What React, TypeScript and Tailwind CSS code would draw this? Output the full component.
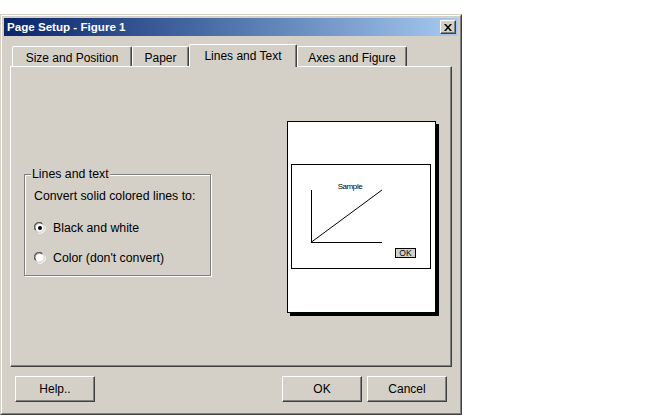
import React from "react";

function Tab({ label, w, selected }: { label: string; w: string; selected?: boolean }) {
  if (selected) {
    return (
      <div
        className={`${w} h-[23px] -mb-px relative z-10 bg-[#d4d0c8] border-t border-l border-white border-r border-r-[#404040] shadow-[inset_-1px_0_0_#808080] rounded-tl-[2px] rounded-tr-[2px] flex items-center justify-center pb-[1px]`}
      >
        {label}
      </div>
    );
  }
  return (
    <div
      className={`${w} h-[20px] bg-[#d4d0c8] border-t border-l border-white border-r border-r-[#404040] shadow-[inset_-1px_0_0_#808080] rounded-tl-[2px] rounded-tr-[2px] flex items-center justify-center pt-[2px]`}
    >
      {label}
    </div>
  );
}

function Button({ label }: { label: string }) {
  return (
    <div className="w-[80px] h-[26px] bg-[#d4d0c8] border border-t-white border-l-white border-b-[#404040] border-r-[#404040] shadow-[inset_-1px_-1px_0_#808080] flex items-center justify-center">
      {label}
    </div>
  );
}

function Radio({ checked }: { checked?: boolean }) {
  return (
    <svg width="12" height="12" viewBox="0 0 12 12" className="shrink-0">
      <path d="M1 8 A5 5 0 0 1 8 1" fill="none" stroke="#808080" strokeWidth="1" />
      <path d="M2 8.5 A4.3 4.3 0 0 1 8.5 2" fill="none" stroke="#404040" strokeWidth="1" />
      <circle cx="6" cy="6" r="4" fill="#fff" />
      <path d="M11 4 A5.5 5.5 0 0 1 4 11" fill="none" stroke="#fff" strokeWidth="1" />
      <path d="M10 4.5 A4.5 4.5 0 0 1 4.5 10" fill="none" stroke="#d4d0c8" strokeWidth="1" />
      {checked && <circle cx="6" cy="6" r="2" fill="#000" />}
    </svg>
  );
}

export default function App() {
  return (
    <div
      className="w-[650px] h-[419px] bg-white pt-[14px] text-[12px] text-black leading-[16px]"
      style={{ fontFamily: '"Liberation Sans", Arial, sans-serif' }}
    >
      <div className="w-[462px] bg-[#d4d0c8] border border-t-[#d4d0c8] border-l-[#d4d0c8] border-b-[#404040] border-r-[#404040]">
        <div className="border border-t-white border-l-white border-b-[#808080] border-r-[#808080] p-[2px]">
          {/* Title bar */}
          <div className="h-[18px] flex items-center justify-between bg-linear-to-r from-[#0a246a] to-[#a6caf0] pl-[3px] pr-[2px]">
            <span className="text-white font-bold text-[11.6px]">Page Setup - Figure 1</span>
            <div className="w-[16px] h-[14px] bg-[#d4d0c8] border border-t-white border-l-white border-b-[#404040] border-r-[#404040] shadow-[inset_-1px_-1px_0_#808080] flex items-center justify-center">
              <svg width="8" height="7" viewBox="0 0 8 7">
                <path d="M0 0 L2 0 L4 2.5 L6 0 L8 0 L5 3.5 L8 7 L6 7 L4 4.5 L2 7 L0 7 L3 3.5 Z" fill="#000" />
              </svg>
            </div>
          </div>

          {/* Tabs */}
          <div className="mt-[8px] h-[22px] flex items-end pl-[8px]">
            <Tab label="Size and Position" w="w-[120px]" />
            <Tab label="Paper" w="w-[57px]" />
            <Tab label="Lines and Text" w="w-[108px]" selected />
            <Tab label="Axes and Figure" w="w-[110px]" />
          </div>

          {/* Panel */}
          <div className="mx-[6px] h-[301px] border border-t-white border-l-white border-b-[#404040] border-r-[#404040] shadow-[inset_-1px_-1px_0_#808080] flex items-start">
            {/* Group box */}
            <div className="relative ml-[13px] mt-[107px] w-[187px] h-[102px] border border-[#808080] shadow-[inset_1px_1px_0_#fff,1px_1px_0_#fff] pl-[9px] pt-[13px] text-[12.3px]">
              <span className="absolute left-[6px] top-[-9px] bg-[#d4d0c8] px-[1px]">Lines and text</span>
              <div>Convert solid colored lines to:</div>
              <div className="mt-[16px] flex items-center gap-[7px] h-[16px]">
                <Radio checked />
                <span>Black and white</span>
              </div>
              <div className="mt-[14px] flex items-center gap-[7px] h-[16px]">
                <Radio />
                <span>Color (don't convert)</span>
              </div>
            </div>

            {/* Preview paper */}
            <div className="ml-[76px] mt-[54px] w-[149px] h-[192px] bg-white border border-black shadow-[3px_3px_0_#000]">
              <svg width="147" height="190" viewBox="0 0 147 190">
                <rect x="3.5" y="42.5" width="139" height="104" fill="none" stroke="#000" />
                <line x1="23.5" y1="68" x2="23.5" y2="121" stroke="#000" />
                <line x1="23" y1="120.5" x2="94" y2="120.5" stroke="#000" />
                <line x1="23.5" y1="120" x2="94" y2="68" stroke="#000" />
                <text
                  x="62"
                  y="67"
                  textAnchor="middle"
                  fontSize="8"
                  letterSpacing="-0.4"
                  fontFamily="Liberation Sans, Arial, sans-serif"
                  fill="#000"
                >
                  Sample
                </text>
                <rect x="107.5" y="126.5" width="20" height="9" fill="#d4d0c8" stroke="#000" />
                <text
                  x="117.5"
                  y="134"
                  textAnchor="middle"
                  fontSize="8.5"
                  fontFamily="Liberation Sans, Arial, sans-serif"
                  fill="#000"
                >
                  OK
                </text>
              </svg>
            </div>
          </div>

          {/* Buttons */}
          <div className="mt-[9px] mb-[9px] flex items-center px-[11px]">
            <Button label="Help.." />
            <div className="flex-1" />
            <div className="flex gap-[5px]">
              <Button label="OK" />
              <Button label="Cancel" />
            </div>
          </div>
        </div>
      </div>
    </div>
  );
}
